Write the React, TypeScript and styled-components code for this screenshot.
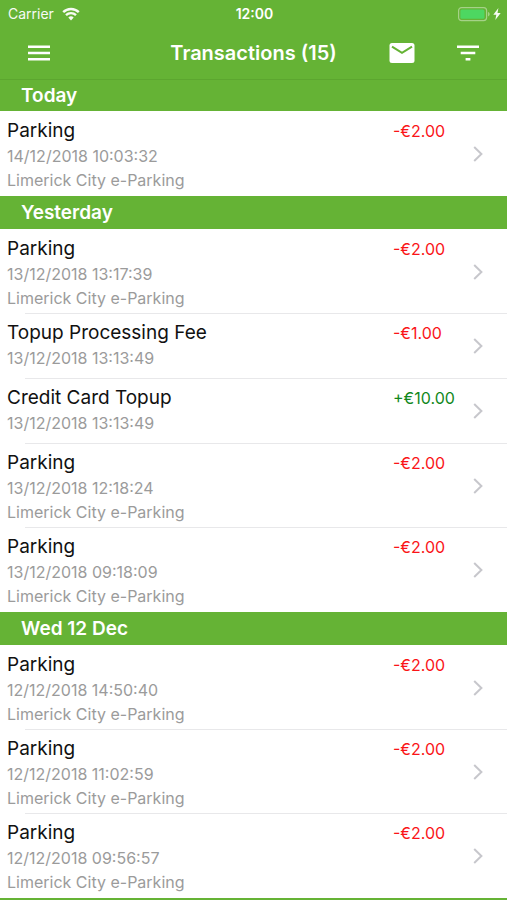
import React from "react";
import styled, { createGlobalStyle } from "styled-components";

const green = "#65b335";

const GlobalStyle = createGlobalStyle`
  *, *::before, *::after { box-sizing: border-box; }
  body {
    margin: 0;
    font-family: Inter, "Liberation Sans", sans-serif;
    background: ${green};
  }
`;

const Screen = styled.div`
  min-height: 100vh;
  background: ${green};
`;

const StatusBar = styled.div`
  display: grid;
  grid-template-columns: 1fr auto 1fr;
  align-items: center;
  height: 28px;
  padding: 0 6px 0 8px;
  color: #fff;
  font-size: 14px;
  line-height: 20px;
`;

const StatusGroup = styled.div<{ $end?: boolean }>`
  display: flex;
  align-items: center;
  justify-content: ${(p) => (p.$end ? "flex-end" : "flex-start")};
  gap: ${(p) => (p.$end ? 2 : 8)}px;
  opacity: 0.95;
`;

const Clock = styled.time`
  font-weight: 600;
`;

const NavBar = styled.header`
  display: grid;
  grid-template-columns: 1fr auto 1fr;
  align-items: center;
  height: 52px;
  padding: 0 19px 2px;
  border-bottom: 1px solid #5ca62f;
  color: #fff;
`;

const Title = styled.h1`
  margin: 0;
  font-size: 20px;
  line-height: 24px;
  font-weight: 600;
`;

const NavActions = styled.div<{ $end?: boolean }>`
  display: flex;
  justify-content: ${(p) => (p.$end ? "flex-end" : "flex-start")};
  gap: 26px;
`;

const IconButton = styled.button`
  display: flex;
  align-items: center;
  justify-content: center;
  width: 40px;
  height: 40px;
  padding: 0;
  border: 0;
  background: none;
  color: #fff;
  cursor: pointer;
`;

const SectionHeader = styled.h2`
  margin: 0;
  padding: 1px 21px 0;
  background: ${green};
  color: #fff;
  font-size: 19px;
  line-height: 32px;
  font-weight: 600;

  header + main section:first-child > & {
    line-height: 30px;
  }
`;

const Rows = styled.ul`
  margin: 0;
  padding: 1px 0 0;
  list-style: none;
  background: #fff;
`;

const Row = styled.li`
  &::after {
    content: "";
    display: block;
    height: 1px;
    margin-left: 25px;
    background: #e8e8ea;
  }

  &:last-child::after {
    background: transparent;
  }
`;

const RowButton = styled.button`
  display: flex;
  align-items: center;
  width: 100%;
  min-height: 64px;
  padding: 0 24px 0 7px;
  border: 0;
  background: none;
  font-family: inherit;
  text-align: left;
  cursor: pointer;
`;

const Details = styled.span`
  display: flex;
  flex: 1;
  flex-direction: column;
  align-self: stretch;
  padding: 6px 0 3px;
`;

const Name = styled.span`
  color: #111;
  font-size: 19px;
  line-height: 26px;
`;

const Meta = styled.span`
  color: #9b9b9b;
  font-size: 16px;
  line-height: 24px;
`;

const Amount = styled.span<{ $credit: boolean }>`
  align-self: flex-start;
  width: 80px;
  padding-top: 6px;
  color: ${(p) => (p.$credit ? "#12881c" : "#fa1418")};
  font-size: 16px;
  line-height: 26px;
`;

const WifiIcon = () => (
  <svg width="18" height="14" viewBox="0 0 18 14" fill="none" stroke="currentColor" strokeWidth="2.4" aria-hidden="true">
    <path d="M1.2 5.2a11 11 0 0 1 15.6 0" />
    <path d="M4 8.2a7.1 7.1 0 0 1 10 0" />
    <path d="M6.3 10.6a3.8 3.8 0 0 1 5.4 0L9 13.4Z" fill="currentColor" stroke="none" />
  </svg>
);

const BatteryIcon = () => (
  <svg width="33" height="16" viewBox="0 0 33 16" aria-hidden="true">
    <rect x="0.6" y="1.6" width="28" height="13" rx="3" fill="none" stroke="#a9d48d" strokeWidth="1.2" />
    <rect x="2.4" y="3.4" width="24" height="9.4" rx="1.5" fill="#4cd964" />
    <path d="M30 6v4.4c1-.3 1.7-1.2 1.7-2.2S31 6.3 30 6Z" fill="#a9d48d" />
  </svg>
);

const BoltIcon = () => (
  <svg width="8" height="12" viewBox="0 0 8 12" fill="currentColor" aria-hidden="true">
    <path d="M5.4 0 .3 6.800h3L2.300 12 7.700 4.900H4.500Z" />
  </svg>
);

const MenuIcon = () => (
  <svg width="24" height="16" viewBox="0 0 24 16" fill="currentColor" aria-hidden="true">
    <path d="M1 .5h22v2.4H1zM1 6.8h22v2.4H1zM1 13.1h22v2.4H1z" />
  </svg>
);

const MailIcon = () => (
  <svg width="26" height="20" viewBox="0 0 26 20" aria-hidden="true">
    <rect x="0.5" y="0" width="25" height="20" rx="2.5" fill="currentColor" />
    <path d="M3 3.7 13 9.900 23 3.700" fill="none" stroke={green} strokeWidth="2" />
  </svg>
);

const FilterIcon = () => (
  <svg width="24" height="16" viewBox="0 0 24 16" fill="currentColor" aria-hidden="true">
    <path d="M1 .5h22v2.4H1zM4.700 6.800h14.600v2.400H4.700zM9.600 13.100h4.800v2.400H9.600z" />
  </svg>
);

const ChevronIcon = () => (
  <svg width="10" height="16" viewBox="0 0 10 16" fill="none" stroke="#c7c7cc" strokeWidth="2" aria-hidden="true">
    <path d="M1.200 1 8.400 8 1.200 15" />
  </svg>
);

type Transaction = { name: string; date: string; place?: string; amount: string };

const limerick = "Limerick City e-Parking";

const sections: { title: string; items: Transaction[] }[] = [
  {
    title: "Today",
    items: [{ name: "Parking", date: "14/12/2018 10:03:32", place: limerick, amount: "-€2.00" }],
  },
  {
    title: "Yesterday",
    items: [
      { name: "Parking", date: "13/12/2018 13:17:39", place: limerick, amount: "-€2.00" },
      { name: "Topup Processing Fee", date: "13/12/2018 13:13:49", amount: "-€1.00" },
      { name: "Credit Card Topup", date: "13/12/2018 13:13:49", amount: "+€10.00" },
      { name: "Parking", date: "13/12/2018 12:18:24", place: limerick, amount: "-€2.00" },
      { name: "Parking", date: "13/12/2018 09:18:09", place: limerick, amount: "-€2.00" },
    ],
  },
  {
    title: "Wed 12 Dec",
    items: [
      { name: "Parking", date: "12/12/2018 14:50:40", place: limerick, amount: "-€2.00" },
      { name: "Parking", date: "12/12/2018 11:02:59", place: limerick, amount: "-€2.00" },
      { name: "Parking", date: "12/12/2018 09:56:57", place: limerick, amount: "-€2.00" },
    ],
  },
];

export default function App() {
  return (
    <Screen>
      <GlobalStyle />
      <StatusBar>
        <StatusGroup>
          <span>Carrier</span>
          <WifiIcon />
        </StatusGroup>
        <Clock>12:00</Clock>
        <StatusGroup $end>
          <BatteryIcon />
          <BoltIcon />
        </StatusGroup>
      </StatusBar>
      <NavBar>
        <NavActions>
          <IconButton type="button" aria-label="Menu">
            <MenuIcon />
          </IconButton>
        </NavActions>
        <Title>Transactions (15)</Title>
        <NavActions $end>
          <IconButton type="button" aria-label="Email transactions">
            <MailIcon />
          </IconButton>
          <IconButton type="button" aria-label="Filter">
            <FilterIcon />
          </IconButton>
        </NavActions>
      </NavBar>
      <main>
        {sections.map((section) => (
          <section key={section.title}>
            <SectionHeader>{section.title}</SectionHeader>
            <Rows>
              {section.items.map((item) => (
                <Row key={item.date + item.name}>
                  <RowButton type="button">
                    <Details>
                      <Name>{item.name}</Name>
                      <Meta>{item.date}</Meta>
                      {item.place && <Meta>{item.place}</Meta>}
                    </Details>
                    <Amount $credit={item.amount.startsWith("+")}>{item.amount}</Amount>
                    <ChevronIcon />
                  </RowButton>
                </Row>
              ))}
            </Rows>
          </section>
        ))}
      </main>
    </Screen>
  );
}
